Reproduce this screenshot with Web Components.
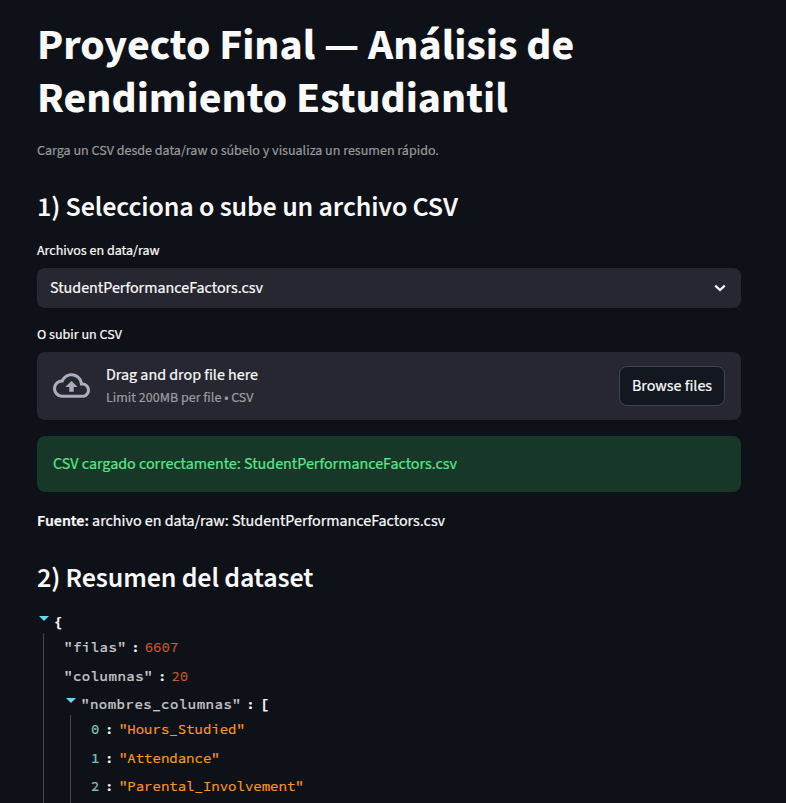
<!DOCTYPE html>
<html lang="es"><head><meta charset="utf-8"><title>Proyecto Final</title>
<style>
html,body{margin:0;height:100%;overflow:hidden;background:#0e1117}
body{color:#fafafa;font:400 16px/1.6 "Source Sans 3","Noto Sans CJK SC",sans-serif;-webkit-text-stroke:.2px}
</style></head><body>
<app-page>
  <app-title>Proyecto Final — Análisis de Rendimiento Estudiantil</app-title>
  <app-caption>Carga un CSV desde data/raw o súbelo y visualiza un resumen rápido.</app-caption>
  <app-heading>1) Selecciona o sube un archivo CSV</app-heading>
  <app-field label="Archivos en data/raw"><app-select>StudentPerformanceFactors.csv</app-select></app-field>
  <app-field label="O subir un CSV"><app-uploader>
    <span>Drag and drop file here</span><span slot="hint">Limit 200MB per file • CSV</span><span slot="action">Browse files</span>
  </app-uploader></app-field>
  <app-alert>CSV cargado correctamente: StudentPerformanceFactors.csv</app-alert>
  <app-text><b>Fuente:</b> archivo en data/raw: StudentPerformanceFactors.csv</app-text>
  <app-heading tight>2) Resumen del dataset</app-heading>
  <json-view>
    <json-group open-mark="{">
      <json-row name='"filas"' value="6607" kind="int"></json-row>
      <json-row name='"columnas"' value="20" kind="int"></json-row>
      <json-group nested name='"nombres_columnas"' open-mark="[">
        <json-row kind="item" name="0" value='"Hours_Studied"'></json-row>
        <json-row kind="item" name="1" value='"Attendance"'></json-row>
        <json-row kind="item" name="2" value='"Parental_Involvement"'></json-row>
      </json-group>
    </json-group>
  </json-view>
</app-page>
<script>
function define(name, markup){
  customElements.define(name, class extends HTMLElement{
    connectedCallback(){
      if(this.shadowRoot) return;
      const a = n => (this.getAttribute(n) || '').replace(/"/g,'&quot;');
      this.attachShadow({mode:'open'}).innerHTML = typeof markup === 'function' ? markup(a) : markup;
    }
  });
}
define('app-page', `<style>:host{display:flex;flex-direction:column;gap:16px;box-sizing:border-box;width:704px;margin-left:37px;padding-top:20px}</style><slot></slot>`);
define('app-title', `<style>:host{display:block;-webkit-text-stroke:0}h1{margin:0;font-size:44px;font-weight:700;line-height:52.8px}</style><h1><slot></slot></h1>`);
define('app-caption', `<style>:host{display:block;font-size:14px;line-height:22px;color:#97999b;margin-top:-2px}</style><slot></slot>`);
define('app-heading', `<style>:host{display:block;padding:12px 0 0;-webkit-text-stroke:0}:host([tight]){padding-top:11px}h2{margin:0;font-size:28px;font-weight:600;line-height:34px;letter-spacing:-.14px}</style><h2><slot></slot></h2>`);
define('app-field', a => `<style>:host{display:flex;flex-direction:column;gap:5px;margin-top:-1px}label{font-size:14px;line-height:24px}</style><label>${a('label')}</label><slot></slot>`);
define('app-select', `<style>:host{display:flex;align-items:center;justify-content:space-between;box-sizing:border-box;height:40px;padding:0 13px;background:#262730;border-radius:8px}span{padding-top:2px}svg{display:block;width:16px;height:16px}</style><span><slot></slot></span><svg viewBox="0 0 16 16" fill="none" stroke="#fafafa" stroke-width="2.2"><path d="M3.2 5.6 8 10.1l4.8-4.5"/></svg>`);
define('app-uploader', `<style>:host{display:flex;align-items:center;box-sizing:border-box;height:68px;padding:0 16px;background:#262730;border-radius:8px}svg{width:37px;height:37px;margin-right:16px;fill:#a9adbf}.t{flex:1;display:flex;flex-direction:column;gap:1px;padding-bottom:1px;line-height:24px}.h{font-size:14px;line-height:20px;color:#9c9da1}button{box-sizing:border-box;height:40px;width:106px;padding:2px 0 0;font:inherit;color:inherit;background:#131720;border:1px solid #41434c;border-radius:8px}</style><svg viewBox="0 0 24 24"><path d="M19.35 10.04C18.67 6.59 15.64 4 12 4 9.11 4 6.6 5.64 5.35 8.04 2.34 8.36 0 10.91 0 14c0 3.31 2.69 6 6 6h13c2.76 0 5-2.24 5-5 0-2.64-2.05-4.78-4.65-4.96zM19 18H6c-2.21 0-4-1.79-4-4s1.79-4 4-4h.71C7.37 7.69 9.48 6 12 6c3.04 0 5.5 2.46 5.5 5.5v.5H19c1.66 0 3 1.34 3 3s-1.34 3-3 3zM8 13h2.55v3h2.9v-3H16l-4-4z"/></svg><div class="t"><div><slot></slot></div><div class="h"><slot name="hint"></slot></div></div><button><slot name="action"></slot></button>`);
define('app-alert', `<style>:host{display:block;padding:16px;line-height:24px;background:#173828;color:#5ce488;border-radius:8px}</style><slot></slot>`);
define('app-text', `<style>:host{display:block;line-height:26px}::slotted(b){font-weight:600}</style><slot></slot>`);
define('json-view', `<style>:host{display:block;padding-top:1px;font:400 14px/20px "Source Code Pro","Noto Sans Mono",monospace}</style><slot></slot>`);
define('json-group', a => `<style>
:host{display:block}:host([nested]){padding-top:4px}
.head{display:flex;height:21px;align-items:flex-start;white-space:pre}
svg{width:10px;height:6px;margin:4px 5px 0 2px;fill:#66d9ef;flex:none}
.k{color:#c5c6c8;letter-spacing:.5px;font-weight:500}.b{font-weight:700}
.c{margin:0 6px 0 5px;font-weight:500}
.body{margin-left:6px;border-left:1px solid #49483e;padding-left:20px}
::slotted(json-row:nth-child(odd)){height:29px}
::slotted(json-row:nth-child(2)){height:28px}
:host([nested]) .body{padding-bottom:30px}
</style><div class="head"><svg viewBox="0 0 10 6"><path d="M0 0h10L5 5z"/></svg>${a('name')?`<span class="k">${a('name')}</span><span class="c">:</span>`:''}<span class="b">${a('open-mark')}</span></div><div class="body"><slot></slot></div>`);
define('json-row', a => `<style>
:host{display:block;line-height:29px;white-space:pre}
.k{color:#c5c6c8;letter-spacing:.5px;font-weight:500}.v{color:#fd971f}.c{margin:0 5px;font-weight:500}
:host([kind=int]) .v{color:#cc5a2b}:host([kind=item]) .k{color:#7fc0b0}
:host([kind=item]) .c{margin-right:5.6px}
</style><span class="k">${a('name')}</span><span class="c">:</span><span class="v">${a('value')}</span>`);
</script></body></html>
